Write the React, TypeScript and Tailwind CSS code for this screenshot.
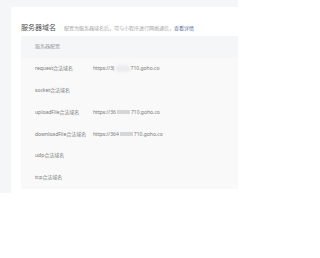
const rows: { label: string; prefix?: string; suffix?: string; mask?: "light" | "dark" }[] = [
  { label: "request合法域名", prefix: "https://3(", suffix: "710.goho.co", mask: "light" },
  { label: "socket合法域名" },
  { label: "uploadFile合法域名", prefix: "https://36", suffix: "710.goho.co", mask: "dark" },
  { label: "downloadFile合法域名", prefix: "https://364", suffix: "710.goho.co", mask: "dark" },
  { label: "udp合法域名" },
  { label: "tcp合法域名" },
];

export default function App() {
  return (
    <div
      className="w-[320px] h-[258px] bg-white"
      style={{ fontFamily: '"Noto Sans", "Noto Sans CJK SC", sans-serif' }}
    >
      <div className="w-[238px] h-[193px] bg-[#f5f6f8] pt-[7px] pl-[11px]">
        <div className="h-full bg-white pl-[10px]">
          <div className="h-[29px] pt-[12px] flex items-center gap-[8px]">
            <span className="text-[7px] leading-[12px] text-[#4d4d4d]">服务器域名</span>
            <span className="text-[5px] leading-[12px] text-[#a3a3a3]">
              配置为服务器域名后，可与小程序进行网络通信，
              <span className="text-[#576b95]">查看详情</span>
            </span>
          </div>
          <div className="h-[153px] bg-[#f9f9f9]">
            <div className="h-[22px] bg-[#f5f6f8] pl-[14px] flex items-center text-[5px] text-[#999]">
              服务器配置
            </div>
            {rows.map((r) => (
              <div key={r.label} className="h-[21.8px] pl-[14px] flex items-center text-[5px] text-[#777]">
                <span className="w-[58px] shrink-0">{r.label}</span>
                {r.prefix && (
                  <span className="flex items-center">
                    {r.prefix}
                    <span
                      className={
                        r.mask === "light"
                          ? "inline-block w-[14px] h-[7px] mx-[1px] rounded-[3px] bg-[#ececec] blur-[1px]"
                          : "inline-block w-[13px] h-[4px] mx-[1px] bg-[#d6d6d6] blur-[0.6px]"
                      }
                    />
                    {r.suffix}
                  </span>
                )}
              </div>
            ))}
          </div>
        </div>
      </div>
    </div>
  );
}
